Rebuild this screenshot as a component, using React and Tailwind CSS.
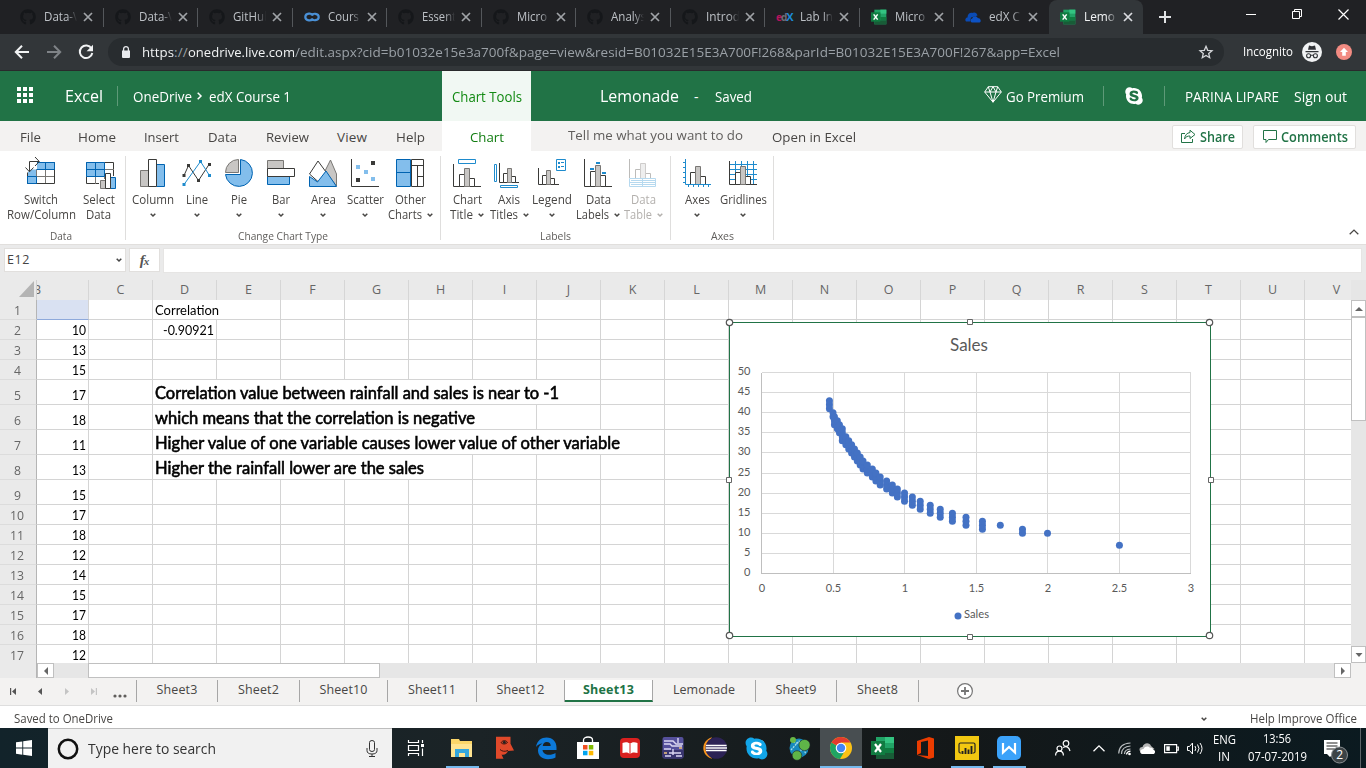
import React, { useLayoutEffect, useRef } from 'react';
import { FaGithub, FaSkype } from 'react-icons/fa';

// Text run fitted to exactly `w` pixels: condensed when too wide, tracked out when too narrow.
function Fit({ w, className = '', children }) {
  const ref = useRef(null);
  useLayoutEffect(() => {
    const el = ref.current;
    el.style.letterSpacing = '0px';
    el.style.transform = 'none';
    const natural = el.getBoundingClientRect().width;
    if (natural > w) {
      el.style.transformOrigin = '0 50%';
      el.style.transform = `scaleX(${w / natural})`;
    } else {
      el.style.letterSpacing = `${(w - natural) / el.textContent.length}px`;
    }
  }, [w, children]);
  return (
    <span className={`block shrink-0 whitespace-nowrap ${className}`} style={{ width: w }}>
      <span ref={ref} className="inline-block">{children}</span>
    </span>
  );
}

const Svg = ({ w = 24, h = 24, box, className = '', children }) => (
  <svg width={w} height={h} viewBox={box || `0 0 ${w} ${h}`} className={`block shrink-0 overflow-visible ${className}`} fill="none">
    {children}
  </svg>
);

const Chevron = ({ className = '' }) => (
  <Svg w={6} h={4} className={className}>
    <path d="M0.7 0.7 3 3 5.3 0.7" stroke="currentColor" strokeWidth="1.5" />
  </Svg>
);

/* ---------- Browser ---------- */

const ExcelLogo = ({ size = 16 }) => (
  <Svg w={size} h={size} box="0 0 24 24">
    <path d="M5 1h18v22H5z" fill="#21a366" />
    <path d="M14 1h9v6h-9z" fill="#33c481" />
    <path d="M5 7h9v6H5z" fill="#107c41" />
    <path d="M14 12h9v5h-9z" fill="#107c41" />
    <path d="M5 17h18v6H5z" fill="#185c37" />
    <path d="M0 5h14v14H0z" fill="#107c41" />
    <path d="m4 8 6 8M10 8l-6 8" stroke="#fff" strokeWidth="2.2" />
  </Svg>
);

const Coursera = () => (
  <Svg w={16} h={16}>
    <path d="M9.300 9.700C8 12 1.300 12.300 1.300 8S8 3.800 9.300 6.500M7.200 9.500C8.500 12 14.700 12 14.700 8S8.500 4 7.200 6.500" stroke="#4a90d6" strokeWidth="2.200" />
  </Svg>
);

const EdX = () => (
  <div className="flex w-4 items-center font-['Open_Sans',sans-serif] text-[10px] font-bold leading-4 tracking-[-1px]">
    <span className="text-[#b5145b]">e</span>
    <span className="text-[#6e6e75]">d</span>
    <span className="text-[11px] text-[#1b8ad6]">X</span>
  </div>
);

const Drive = () => (
  <Svg w={16} h={16}>
    <path d="M1 12.500c-1.500-2 0-4 1.500-4C2.500 5 5 3 8 4c1.500-1 4 0 4.500 2.500L6 8.500 5 12.500z" fill="#0a4bb5" />
    <path d="M7 13.500c-2-.5-2-3.500.2-4C8 6.800 11.500 6.500 12.700 9c3 0 4 3.500 2 4.500z" fill="#0d52c4" />
  </Svg>
);

const git = <FaGithub size={16} color="#15171a" />;
const TABS = [
  [git, 'Data-V', 36],
  [git, 'Data-V', 36],
  [git, 'GitHub', 38],
  [<Coursera />, 'Cours', 31],
  [git, 'Essent', 34],
  [git, 'Micro', 30],
  [git, 'Analys', 35],
  [git, 'Introd', 34],
  [<EdX />, 'Lab In', 33],
  [<ExcelLogo />, 'Micro', 30],
  [<Drive />, 'edX C', 31],
  [<ExcelLogo />, 'Lemo', 31],
];

function BrowserTab({ icon, label, w, active, divider }) {
  return (
    <div className={`relative flex h-[34px] w-[94.5px] shrink-0 items-center pl-[11px] ${active ? 'rounded-t-lg bg-[#323639]' : ''}`}>
      {icon}
      <div className="ml-2 w-[33px] overflow-hidden [mask-image:linear-gradient(to_right,black_70%,transparent)]">
        <Fit w={w} className={`text-[12px] leading-4 ${active ? 'text-[#f1f3f4]' : 'text-[#bdc1c6]'}`}>{label}</Fit>
      </div>
      <Svg w={8} h={8} className="ml-[7px]">
        <path d="m0 0 8 8M8 0 0 8" stroke={active ? '#dadce0' : '#a0a3a7'} strokeWidth="1.700" />
      </Svg>
      {divider && <div className="absolute right-0 top-[8px] h-[19px] w-px bg-[#54575b]" />}
    </div>
  );
}

function Browser() {
  return (
    <div className="bg-[#202124] font-['Open_Sans',sans-serif]">
      <div className="flex h-[34px] items-center pl-[9px]">
        {TABS.map(([icon, label, w], i) => (
          <BrowserTab key={i} icon={icon} label={label} w={w} active={i === 11} divider={i < 10} />
        ))}
        <Svg w={12} h={12} className="ml-[16px]">
          <path d="M6 0v12M0 6h12" stroke="#e0e2e4" strokeWidth="2" />
        </Svg>
        <div className="mb-[6px] ml-[75px] flex items-center">
          <Svg w={10} h={10}><path d="M0 5.500h10" stroke="#fff" /></Svg>
          <Svg w={10} h={10} className="ml-9">
            <path d="M.5 2.500h7v7h-7zM2.500 2V.5h7v7H8" stroke="#fff" />
          </Svg>
          <Svg w={11} h={11} className="ml-9"><path d="m.5.5 10 10m0-10-10 10" stroke="#fff" strokeWidth="1.200" /></Svg>
        </div>
      </div>
      <div className="flex h-[36px] items-center bg-[#323639] pl-[14px]">
        <Svg w={16} h={14}>
          <path d="M15 7H2M8 .8 1.800 7 8 13.200" stroke="#f1f3f4" strokeWidth="2" />
        </Svg>
        <Svg w={16} h={14} className="ml-4">
          <path d="M1 7h13M8 .8 14.200 7 8 13.200" stroke="#7f8387" strokeWidth="2" />
        </Svg>
        <Svg w={16} h={16} className="ml-4">
          <path d="M13.500 4.500A6.300 6.300 0 1 0 14.300 9" stroke="#f1f3f4" strokeWidth="2" />
          <path d="M15 .8v6.400H8.600z" fill="#f1f3f4" />
        </Svg>
        <div className="ml-[14px] flex h-[28px] w-[1116px] items-center rounded-full bg-[#282c2f] pl-[14px]">
          <Svg w={8} h={12}>
            <path d="M0 4.500h8V11a1 1 0 0 1-1 1H1a1 1 0 0 1-1-1z" fill="#e8eaed" />
            <path d="M1.600 5V3a2.400 2.400 0 0 1 4.800 0v2" stroke="#e8eaed" strokeWidth="1.300" />
          </Svg>
          <div className="ml-[12px] flex text-[13.5px] leading-5 text-[#9aa0a6]">
            <Fit w={32} className="text-[#f1f3f4]">https</Fit>
            <Fit w={14}>://</Fit>
            <Fit w={107} className="text-[#f1f3f4]">onedrive.live.com</Fit>
            <Fit w={765}>/edit.aspx?cid=b01032e15e3a700f&amp;page=view&amp;resid=B01032E15E3A700F!268&amp;parId=B01032E15E3A700F!267&amp;app=Excel</Fit>
          </div>
          <Svg w={14} h={14} className="ml-[139px]">
            <path d="m7 1.300 1.700 4 4.300.4-3.300 2.800 1 4.200L7 10.500l-3.700 2.200 1-4.200L1 5.700l4.300-.4z" stroke="#d5d7da" strokeWidth="1.300" />
          </Svg>
        </div>
        <Fit w={50} className="ml-[19px] text-[12px] leading-4 text-white">Incognito</Fit>
        <Svg w={20} h={20} className="ml-[9px]">
          <circle cx="10" cy="10" r="10" fill="#f1f3f4" />
          <path d="M3.500 9h13v1.200h-13zM6 7.800l1-4.300 3 .7 3-.7 1 4.300z" fill="#303337" />
          <circle cx="6.600" cy="13.800" r="2" stroke="#303337" strokeWidth="1.100" />
          <circle cx="13.400" cy="13.800" r="2" stroke="#303337" strokeWidth="1.100" />
          <path d="M8.600 13.500q1.400-.8 2.800 0" stroke="#303337" />
        </Svg>
        <Svg w={16} h={16} className="ml-[14px]">
          <circle cx="8" cy="8" r="8" fill="#f28b82" />
          <path d="m8 3.800 4 4.200H9.800v3.800H6.200V8H4z" fill="#fff" />
        </Svg>
      </div>
      <div className="h-px bg-[#292a2c]" />
    </div>
  );
}

/* ---------- Excel header ---------- */

function ExcelHeader() {
  return (
    <div className="flex h-[50px] items-center bg-[#217346] text-[14px] leading-5 text-white">
      <div className="mb-[2px] ml-[17px] grid grid-cols-3 gap-[2px]">
        {Array.from({ length: 9 }, (_, i) => <div key={i} className="size-[4px] bg-white" />)}
      </div>
      <Fit w={38} className="ml-[32px] text-[17px]">Excel</Fit>
      <div className="ml-[14px] h-[20px] w-px bg-[#5e9a78]" />
      <Fit w={59} className="ml-[15px] mt-px">OneDrive</Fit>
      <Svg w={5} h={8} className="ml-[5px]"><path d="m.7.700 3.300 3.300-3.300 3.300" stroke="#fff" strokeWidth="1.500" /></Svg>
      <Fit w={82} className="ml-[7px] mt-px">edX Course 1</Fit>
      <div className="ml-[151px] flex h-[50px] w-[89px] items-center justify-center bg-[#f1f8f3] text-[#138a13]">
        <Fit w={70} className="mt-[2px]">Chart Tools</Fit>
      </div>
      <Fit w={79} className="ml-[69px] text-[17px]">Lemonade</Fit>
      <Fit w={6} className="ml-[15px] mt-px">-</Fit>
      <Fit w={37} className="ml-[15px] mt-px">Saved</Fit>
      <Svg w={18} h={17} className="-mt-[3px] ml-[232px]">
        <path d="M4.300.7h9.400L17.300 6 9 16.200.7 6zM.7 6h16.600M4.300.7 6 6l3 10.200M13.700.7 12 6 9 16.200M9 .7 6 6m3-5.300L12 6" stroke="#fff" strokeWidth="1" />
      </Svg>
      <Fit w={78} className="ml-[4px] mt-px">Go Premium</Fit>
      <div className="ml-[19px] h-[20px] w-px bg-[#5e9a78]" />
      <FaSkype size={20} className="ml-[20px] shrink-0" />
      <div className="ml-[20px] h-[20px] w-px bg-[#5e9a78]" />
      <Fit w={94} className="ml-[20px] mt-px">PARINA LIPARE</Fit>
      <Fit w={53} className="ml-[15px] mt-px">Sign out</Fit>
    </div>
  );
}

const MenuItem = ({ box, w, children }) => (
  <div className={`flex shrink-0 justify-center ${box}`}><Fit w={w}>{children}</Fit></div>
);

function MenuBar() {
  return (
    <div className="flex h-[30px] items-center bg-[#f3f2f1] pt-px text-[13.5px] leading-5 text-[#484644]">
      <MenuItem box="w-[61px]" w={21}>File</MenuItem>
      <MenuItem box="w-[72px]" w={38}>Home</MenuItem>
      <MenuItem box="w-[57px]" w={35}>Insert</MenuItem>
      <MenuItem box="w-[64px]" w={29}>Data</MenuItem>
      <MenuItem box="w-[66px]" w={43}>Review</MenuItem>
      <MenuItem box="w-[64px]" w={30}>View</MenuItem>
      <MenuItem box="w-[53px]" w={29}>Help</MenuItem>
      <div className="-mt-px ml-[5px] flex h-[30px] w-[89px] items-center justify-center bg-white pt-[2px] text-[#107c10]">
        <Fit w={34}>Chart</Fit>
      </div>
      <Fit w={175} className="-mt-[3px] ml-[37px] text-[#605e5c]">Tell me what you want to do</Fit>
      <Fit w={84} className="ml-[29px]">Open in Excel</Fit>
      <div className="ml-[316px] flex h-[24px] w-[71px] items-center rounded-[2px] border border-[#e1dfdd] bg-white pl-[8px] text-[#217346]">
        <Svg w={15} h={15}>
          <path d="M4 4.500H.5v9h11V10" stroke="#217346" />
          <path d="M9 1.200 14 5.500 9 9.500V7c-2.500 0-4 .5-5.500 3C4 6 6 3.800 9 3.600z" stroke="#217346" strokeLinejoin="round" />
        </Svg>
        <Fit w={35} className="ml-[4px] font-semibold">Share</Fit>
      </div>
      <div className="ml-[10px] flex h-[24px] w-[103px] items-center rounded-[2px] border border-[#e1dfdd] bg-white pl-[9px] text-[#217346]">
        <Svg w={14} h={13}>
          <path d="M.5.500h13v9H5.500l-2.500 3v-3H.5z" stroke="#217346" />
        </Svg>
        <Fit w={67} className="ml-[4px] font-semibold">Comments</Fit>
      </div>
    </div>
  );
}

/* ---------- Ribbon ---------- */

const K = '#3a3a38';
const G = '#c8c6c4';
const GD = '#797774';
const B = '#83beec';
const BD = '#0063b1';
const L = '#1e8bcd';

const I = {
  switch: (
    <>
      <path d="M27.500 162.500h27v21h-27z" fill="#fff" />
      <path d="M37 162.500h17.500v7H37zM27.500 176.500h9v7h-9zM27.500 169.500h9v7h-9z" fill={B} />
      <path d="M36.500 176.500h18M45.500 169.500v14M36.500 183.500v-14" stroke={GD} />
      <path d="M27.500 170v13.500h27v-21H37" stroke={K} />
      <path d="M36.500 169.500h18m-9-7v7m-18 7h9v7M37 162.500h17.500v7M27.500 176v7.500h9" stroke={BD} />
      <path d="M24 157h13l-2 8-9 9z" fill="#fff" />
      <path d="M29.500 171.500v-10h9.500M25.500 167.500l4 4.300 4-4.300M35 157l4.300 4.500L35 166" stroke={K} />
    </>
  ),
  select: (
    <>
      <path d="M85.500 162.500h27v21h-27z" fill="#fff" stroke={K} />
      <path d="M85.500 162.500h18v14h-18z" fill={B} />
      <path d="M103.500 162v21M85 176.500h27M103 169.500h10M94.500 176v8" stroke={GD} />
      <path d="M85.500 162.500h18v14h-18zM94.500 162v14M85 169.500h18" stroke={BD} />
      <path d="M98 179h6v-7h6v4h6v14H98z" fill="#fff" />
      <path d="M99.500 180.500h5v8h-5z" fill={G} stroke={GD} />
      <path d="M109.500 177.500h5v11h-5z" fill={B} stroke={BD} />
      <path d="M104.500 173.500h5v15h-5z" fill="#fff" stroke={K} />
    </>
  ),
  column: (
    <>
      <path d="M140.500 170.500h8v16h-8z" fill={G} stroke={GD} />
      <path d="M156.500 164.500h8v22h-8z" fill={B} stroke={BD} />
      <path d="M148.500 159.500h8v27h-8z" fill="#fff" stroke={K} />
    </>
  ),
  line: (
    <>
      <path d="m184 175.500 4.500-10 10 15 10.500-16" stroke={K} />
      <path d="m184 184.500 16.500-23 9 14" stroke={L} />
      <path d="M182.500 174h3v3h-3zM187 164h3v3h-3zM197 179h3v3h-3zM208 163h3v3h-3z" fill={K} />
      <path d="M182.500 183h3v3h-3zM199 160h3v3h-3zM208 174h3v3h-3z" fill={L} />
    </>
  ),
  pie: (
    <>
      <path d="M240.500 159.500a13.500 13.500 0 1 1-15 15h15z" fill={B} stroke={BD} />
      <path d="M225.500 172.500a13 13 0 0 1 13-13v13z" fill={G} stroke={GD} />
    </>
  ),
  bar: (
    <>
      <path d="M267.500 160.500h16v8h-16z" fill={G} stroke={GD} />
      <path d="M267.500 176.500h22v8h-22z" fill={B} stroke={BD} />
      <path d="M267.500 168.500h27v8h-27z" fill="#fff" stroke={K} />
    </>
  ),
  area: (
    <>
      <path d="m325 171 5.500-11 6 14v12z" fill={G} stroke={GD} />
      <path d="m309.500 174 8.500-13 8 11-7.500 10z" fill="#fff" stroke={K} />
      <path d="M309.500 186.500v-10l8 5.500 8.500-11 10.500 15.500z" fill={B} stroke={BD} />
    </>
  ),
  scatter: (
    <>
      <path d="M351.500 159v27.500H379" stroke={K} />
      <path d="M371 161h4v4h-4zM356 178h4v4h-4z" fill={K} />
      <path d="M356 165h4v4h-4zM364 170h4v4h-4zM371 177h4v4h-4z" fill={B} />
    </>
  ),
  other: (
    <>
      <path d="M411.500 159.500h12v27h-12zM411 165.500h13M417.500 165v21M417 176.500h7" fill="#fff" stroke={K} />
      <path d="M396.500 159.500h14v27h-14zM396.500 172.500h14" fill={B} stroke={BD} />
    </>
  ),
  title: (
    <>
      <path d="M458.500 159.500h17v4h-17z" stroke={L} />
      <path d="M453.500 164v22.500H481" stroke={K} />
      <path d="M459.500 174.500h5v12h-5zM469.500 178.500h5v8h-5z" fill="#fff" stroke={K} />
      <path d="M464.500 168.500h5v18h-5z" fill={G} stroke={GD} />
    </>
  ),
  titles: (
    <>
      <path d="M494.500 164.500h2v17h-2zM500.500 185.500h17v2h-17z" stroke={L} />
      <path d="M499.500 163v19.500H519" stroke={K} />
      <path d="M503.500 173.500h4v9h-4zM511.500 176.500h4v6h-4z" fill="#fff" stroke={K} />
      <path d="M507.500 168.500h4v14h-4z" fill={G} stroke={GD} />
    </>
  ),
  legend: (
    <>
      <path d="M556.500 159.500h9v11h-9z" stroke={L} />
      <path d="M558 162h2v2h-2zm3 0h3v1h-3zM558 166h2v2h-2zm3 0h3v1h-3z" fill={L} />
      <path d="M538.500 168v16.500H559" stroke={K} />
      <path d="M542.500 175.500h4v9h-4zM550.500 178.500h4v6h-4z" fill="#fff" stroke={K} />
      <path d="M546.500 170.500h4v14h-4z" fill={G} stroke={GD} />
    </>
  ),
  labels: (
    <>
      <path d="M584.500 159v27.500H612" stroke={K} />
      <path d="M590.500 171.500h5v15h-5zM600.500 175.500h5v11h-5z" fill="#fff" stroke={K} />
      <path d="M595.500 165.500h5v21h-5z" fill={G} stroke={GD} />
      <path d="M590 168h4v2h-4zM596 162h4v2h-4zM602 172h4v2h-4z" fill={L} />
    </>
  ),
  table: (
    <>
      <path d="M629.500 159v19" stroke="#bcbbb9" />
      <path d="M635.500 169.500h5v9h-5zM645.500 173.500h5v5h-5z" fill="#fff" stroke="#bcbbb9" />
      <path d="M640.500 163.500h5v15h-5z" fill="#eee" stroke="#cecccb" />
      <path d="M629.500 178.500h26v8h-26zM629 182.500h27M642.500 178v8M631 180.500h24M631 184.500h24" fill="#fff" stroke="#b6d9ef" />
    </>
  ),
  axes: (
    <>
      <path d="M690.500 172.500h5v12h-5zM700.500 176.500h5v8h-5z" fill="#fff" stroke={K} />
      <path d="M695.500 166.500h5v18h-5z" fill={G} stroke={GD} />
      <path d="M685.500 159v25.500H711M683 162.500h2m-2 5h2m-2 5h2m-2 5h2m-2 5h2M688.500 185v2m5-2v2m5-2v2m5-2v2m5-2v2" stroke={L} />
    </>
  ),
  grid: (
    <>
      <path d="M735.500 161v23m6-23v23m6-23v23m6-23v23M730 164.500h27m-27 5h27m-27 5h27m-27 5h27" stroke={L} />
      <path d="M729.500 161v23.500H757" stroke={K} />
      <path d="M735.500 172.500h5v12h-5zM745.500 176.500h5v8h-5z" fill="#fff" stroke={K} />
      <path d="M740.500 166.500h5v18h-5z" fill={G} stroke={GD} />
    </>
  ),
};

const GROUPS = [
  { label: 'Data', lw: 22, width: 'w-[126px] pl-[3px]', items: [
    ['w-[76px]', 41, 'switch', ['Switch', 34], ['Row/Column', 69]],
    ['w-[39px]', 98, 'select', ['Select', 32], ['Data', 25]],
  ] },
  { label: 'Change Chart Type', lw: 90, width: 'w-[315px] pl-[5px]', items: [
    ['w-[44px]', 153, 'column', ['Column', 42]],
    ['w-[44px]', 197, 'line', ['Line', 22]],
    ['w-[40px]', 239, 'pie', ['Pie', 16]],
    ['w-[44px]', 281, 'bar', ['Bar', 18]],
    ['w-[40px]', 323, 'area', ['Area', 25]],
    ['w-[44px]', 365, 'scatter', ['Scatter', 37]],
    ['w-[46px]', 410, 'other', ['Other', 31], ['Charts', 34], true],
  ] },
  { label: 'Labels', lw: 31, width: 'w-[230px] pl-[6px]', items: [
    ['w-[40px]', 467, 'title', ['Chart', 29], ['Title', 23], true],
    ['w-[44px]', 509, 'titles', ['Axis', 22], ['Titles', 28], true],
    ['w-[42px]', 552, 'legend', ['Legend', 40]],
    ['w-[50px]', 598, 'labels', ['Data', 25], ['Labels', 33], true],
    ['w-[40px]', 643, 'table', ['Data', 25], ['Table', 28], true, true],
  ] },
  { label: 'Axes', lw: 23, width: 'w-[103px] pl-[6px]', items: [
    ['w-[40px]', 697, 'axes', ['Axes', 25]],
    ['w-[52px]', 743, 'grid', ['Gridlines', 47]],
  ] },
];

function RibbonButton({ item }) {
  const [box, cx, icon, l1, l2, arrow, disabled] = item;
  return (
    <div className={`flex shrink-0 flex-col items-center ${box} ${disabled ? 'text-[#b3b0ad]' : 'text-[#484644]'}`}>
      <Svg w={32} h={35} box={`${cx - 16} 155 32 35`}>{I[icon]}</Svg>
      <Fit w={l1[1]} className="mt-[2px]">{l1[0]}</Fit>
      <div className="flex h-[15px] items-center justify-center">
        {l2 && <Fit w={l2[1]}>{l2[0]}</Fit>}
        {(arrow || !l2) && <Chevron className={l2 ? 'ml-[5px]' : 'mt-px'} />}
      </div>
    </div>
  );
}

function Ribbon() {
  return (
    <div className="flex h-[94px] border-b border-[#e1dfdd] bg-white text-[12px] leading-[15px]">
      {GROUPS.map((g) => (
        <div key={g.label} className={`relative flex shrink-0 flex-col pt-[4px] ${g.width}`}>
          <div className="flex h-[70px]">
            {g.items.map((it) => <RibbonButton key={it[2]} item={it} />)}
          </div>
          <div className="flex justify-center pr-[7px] pt-[3px] text-[11px] text-[#605e5c]"><Fit w={g.lw}>{g.label}</Fit></div>
          <div className="absolute right-0 top-[5px] h-[84px] w-px bg-[#dfdedd]" />
        </div>
      ))}
      <div className="flex flex-1 items-end justify-end pb-[9px] pr-[7px]">
        <Svg w={10} h={6}><path d="m.7 5.300 4.300-4.200 4.300 4.200" stroke="#484644" strokeWidth="1.300" /></Svg>
      </div>
    </div>
  );
}

function FormulaBar() {
  return (
    <div className="flex h-[35px] items-start bg-[#eaeaea] pl-[4px] pt-[3px]">
      <div className="flex h-[24px] w-[122px] items-center justify-between border border-[#e1dfdd] bg-white pl-[2px] pr-[3px] text-[12.5px] text-[#444]">
        <Fit w={23} className="mt-px">E12</Fit>
        <Chevron />
      </div>
      <div className="ml-[3px] flex h-[24px] w-[31px] items-center justify-center border border-[#e1dfdd] bg-white pb-px font-['Liberation_Serif',serif] text-[15px] font-bold italic leading-5 text-[#555]">
        f<span className="-ml-px mt-[3px] text-[11px]">x</span>
      </div>
      <div className="ml-[3px] h-[25px] w-[1199px] border border-[#e6e5e4] bg-white" />
    </div>
  );
}

/* ---------- Grid ---------- */

const COLS = 'CDEFGHIJKLMNOPQRSTUV'.split('');
const B_VALUES = ['', 10, 13, 15, 17, 18, 11, 13, 15, 17, 18, 12, 14, 15, 17, 18, 12];
// row -> [text, width, number of columns covered starting at D]
const NOTES = {
  1: ['Correlation', 64, 2],
  5: ['Correlation value between rainfall and sales is near to -1', 404, 7],
  6: ['which means that the correlation is negative', 320, 6],
  7: ['Higher value of one variable causes lower value of other variable', 465, 8],
  8: ['Higher the rainfall lower are the sales', 269, 5],
};

function Row({ n }) {
  const tall = n >= 5 && n <= 9;
  const note = NOTES[n];
  return (
    <div className={`flex shrink-0 ${tall ? 'h-[25px]' : 'h-[20px]'}`}>
      <div className="flex w-[37px] shrink-0 items-end justify-center border-b border-r border-b-[#dcdcdc] border-r-[#b5b5b5] bg-[#eaeaea] pr-[2px] text-[12.5px] leading-[17px] text-[#666]">
        <Fit w={n > 9 ? 14 : 7}>{String(n)}</Fit>
      </div>
      <div className={`flex w-[52px] shrink-0 items-end justify-end border-b border-r pr-[2px] ${n === 1 ? 'border-b-[#8ea9db] border-r-[#d4d4d4] bg-[#d9e1f2]' : 'border-[#d4d4d4]'}`}>
        {n > 1 && <Fit w={14} className="font-['Lato',sans-serif] text-[13.5px] leading-[17px] text-black">{String(B_VALUES[n - 1])}</Fit>}
      </div>
      {COLS.map((c, i) => {
        const spill = note && i >= 1 && i < note[2];
        return (
          <div key={c} className={`relative flex w-[64px] shrink-0 items-end border-b ${spill ? 'border-b-[#d4d4d4]' : 'border-r border-[#d4d4d4]'}`}>
            {c === 'D' && note && (
              <Fit w={note[1]} className={`relative z-10 ml-[2px] font-['Lato',sans-serif] text-black ${n === 1 ? 'text-[13.5px] leading-[17px]' : 'text-[17px] leading-[23px] [-webkit-text-stroke:0.6px_black]'}`}>{note[0]}</Fit>
            )}
            {c === 'D' && n === 2 && <Fit w={51} className="ml-[10px] font-['Lato',sans-serif] text-[13.5px] leading-[17px] text-black">-0.90921</Fit>}
          </div>
        );
      })}
    </div>
  );
}

const POINTS = [
  [0.475, 41, 43], [0.5, 39, 40], [0.51, 37, 39], [0.53, 36, 38], [0.545, 35, 37], [0.565, 33, 36],
  [0.59, 32, 34], [0.61, 31, 33], [0.63, 30, 32], [0.65, 29, 31], [0.67, 28, 30], [0.69, 27, 29], [0.71, 26, 28],
  [0.74, 25, 27], [0.775, 24, 26], [0.8, 23, 25], [0.83, 22, 24], [0.875, 21, 23], [0.915, 20, 22], [0.95, 19, 21],
  [1, 18, 20], [1.055, 17, 19], [1.11, 16, 18], [1.18, 15, 17], [1.25, 14, 16], [1.335, 13, 15], [1.43, 12, 14],
  [1.545, 11, 13], [1.67, 12, 12], [1.825, 10, 11], [2, 10, 10], [2.503, 7, 7],
];
const px = (v) => 32.5 + v * 143;
const py = (v) => 251.5 - v * 4.02;

function SalesChart() {
  const dots = POINTS.flatMap(([x, lo, hi]) => Array.from({ length: (hi - lo) * 2 + 1 }, (_, i) => [x, lo + i / 2]));
  const ys = [0, 5, 10, 15, 20, 25, 30, 35, 40, 45, 50];
  const xs = [0, 0.5, 1, 1.5, 2, 2.5, 3];
  return (
    <div className="absolute left-[729px] top-[42px] z-20">
      <Svg w={482} h={315}>
        <rect x="0.500" y="0.500" width="481" height="314" fill="#fff" stroke="#217346" />
        <g stroke="#d9d9d9" shapeRendering="crispEdges">
          {ys.map((v) => <path key={v} d={`M32.500 ${py(v)}H461.500`} />)}
          {xs.map((v) => <path key={v} d={`M${px(v)} 50.500V251.500`} />)}
          <path d="M32.500 50.500v201h429" stroke="#bfbfbf" />
        </g>
        {dots.map(([x, y], i) => (
          <circle key={i} cx={px(x)} cy={py(y)} r={y % 1 ? 3 : 3.5} fill="#4472c4" />
        ))}
        <g className="font-['Lato',sans-serif] text-[11px]" fill="#595959">
          {ys.map((v) => <text key={v} x="21.500" y={py(v) + 2.5} textAnchor="end">{v}</text>)}
          {xs.map((v) => <text key={v} x={px(v) + 0.5} y="270" textAnchor="middle">{v}</text>)}
          <text x="240" y="29" textAnchor="middle" textLength="38" lengthAdjust="spacingAndGlyphs" className="text-[18px]">Sales</text>
          <text x="235" y="296" textLength="25" lengthAdjust="spacingAndGlyphs" className="text-[12px]">Sales</text>
        </g>
        <circle cx="229" cy="294" r="3.500" fill="#4472c4" />
        <g fill="#fff" stroke="#555">
          {[[0.5, 0.5], [480.5, 0.5], [0.5, 313.5], [480.5, 313.5]].map(([x, y]) => <circle key={`${x}-${y}`} cx={x} cy={y} r="3.200" strokeWidth="1.200" />)}
          {[[241, 0], [241, 315], [0, 158], [482, 158]].map(([x, y]) => <path key={`${x}-${y}`} d={`M${x - 2.5} ${y - 2.5}h5v5h-5z`} stroke="#666" />)}
        </g>
      </Svg>
    </div>
  );
}

const ScrollButton = ({ box, d }) => (
  <div className={`flex shrink-0 items-center justify-center border border-[#c0c0c0] bg-white ${box}`}>
    <Svg w={8} h={8}><path d={d} fill="#666" /></Svg>
  </div>
);

function Sheet() {
  return (
    <div className="relative flex h-[398px] flex-col bg-white">
      <div className="flex h-[383px]">
        <div className="flex h-[383px] w-[1351px] flex-col overflow-hidden">
          <div className="flex h-[20px] shrink-0 bg-[#eaeaea] text-[12.5px] leading-5 text-[#666]">
            <div className="flex w-[37px] shrink-0 items-start justify-end border-r border-[#d0d0d0] pr-[2px] pt-px">
              <Svg w={15} h={16}><path d="M15 0v16H0z" fill="#b4b4b4" /></Svg>
            </div>
            <div className="w-[52px] shrink-0 overflow-hidden border-r border-[#d6d6d6]"><div className="-ml-[4px]">B</div></div>
            {COLS.map((c) => <div key={c} className="w-[64px] shrink-0 border-r border-[#d6d6d6] text-center">{c}</div>)}
          </div>
          {B_VALUES.map((_, i) => <Row key={i} n={i + 1} />)}
        </div>
        <div className="flex w-[15px] flex-col bg-[#e6e6e6] pt-[20px]">
          <ScrollButton box="h-[17px] w-[15px]" d="M0 6h8L4 2z" />
          <div className="h-[104px] border border-[#c0c0c0] bg-white" />
          <div className="flex-1" />
          <ScrollButton box="h-[17px] w-[15px]" d="M0.500 2h7L4 6z" />
        </div>
      </div>
      <div className="flex h-[15px] bg-[#e6e6e6]">
        <div className="w-[37px] shrink-0 border-r border-[#b5b5b5] bg-[#eaeaea]" />
        <ScrollButton box="h-[15px] w-[17px]" d="M6 0v8L2 4z" />
        <div className="ml-[34px] w-[292px] border border-[#c0c0c0] bg-white" />
        <div className="flex-1" />
        <ScrollButton box="h-[15px] w-[17px]" d="M2 0v8l4-4z" />
        <div className="w-[15px] bg-[#f3f2f1]" />
      </div>
      <SalesChart />
    </div>
  );
}

const SHEETS = [
  ['Sheet3', 'w-[81px]', 41], ['Sheet2', 'w-[82px]', 41], ['Sheet10', 'w-[88px]', 48], ['Sheet11', 'w-[89px]', 48],
  ['Sheet12', 'w-[88px]', 48], ['Sheet13', 'w-[88px]', 51], ['Lemonade', 'w-[103px]', 62], ['Sheet9', 'w-[81px]', 41], ['Sheet8', 'w-[82px]', 41],
];

function SheetTabs() {
  return (
    <div className="flex h-[28px] items-start border-b border-[#dedede] bg-[#f3f2f1] text-[12.5px] leading-[20px] text-[#484644]">
      <div className="mt-[2px] flex h-[22px] w-[137px] shrink-0 items-center border-r border-[#a6a6a6] pl-[10px]">
        <Svg w={6} h={7}><path d="M0 0h1.200v7H0z M6 0v7L2 3.500z" fill="#555" /></Svg>
        <Svg w={4} h={7} className="ml-[22px]"><path d="M4 0v7L0 3.500z" fill="#555" /></Svg>
        <Svg w={4} h={7} className="ml-[23px]"><path d="M0 0v7l4-3.500z" fill="#c4c4c4" /></Svg>
        <Svg w={6} h={7} className="ml-[22px]"><path d="M6 0H4.800v7H6zM0 0v7l4-3.500z" fill="#c4c4c4" /></Svg>
        <Svg w={14} h={4} className="ml-[16px] mt-[10px]"><circle cx="2" cy="2" r="1.600" fill="#605e5c" /><circle cx="7" cy="2" r="1.600" fill="#605e5c" /><circle cx="12" cy="2" r="1.600" fill="#605e5c" /></Svg>
      </div>
      {SHEETS.map(([name, box, w]) => (
        <div key={name} className={`mt-[2px] flex h-[22px] shrink-0 justify-center border-r border-[#a6a6a6] ${box} ${name === 'Sheet13' ? 'border-b-2 border-b-[#217346] bg-white font-bold text-[#217346]' : ''}`}>
          <Fit w={w}>{name}</Fit>
        </div>
      ))}
      <Svg w={16} h={16} className="ml-[38px] mt-[5px]">
        <circle cx="8" cy="8" r="7.400" stroke="#767676" strokeWidth="1.200" fill="#fff" />
        <path d="M8 4v8M4 8h8" stroke="#767676" strokeWidth="1.800" />
      </Svg>
    </div>
  );
}

/* ---------- Windows taskbar ---------- */

const SkypeApp = () => (
  <div className="relative flex size-[24px] items-center justify-center">
    <div className="absolute left-[5px] top-[4px] h-[16px] w-[14px] rounded bg-white" />
    <FaSkype size={25} color="#12a5e8" className="relative shrink-0" />
  </div>
);

const APPS = [
  ['explorer', <Svg><path d="M1 3h8l1 2h12v16H1z" fill="#fbd669" /><path d="M1 8h21v13H1z" fill="#ffe491" /><path d="M5 13h14v8h-4v-4H9v4H5z" fill="#35a7dd" /></Svg>, true],
  ['face', <Svg><path d="M4 .7h14.500v7L22 14.500l-6 .5c-1 3-4 4.300-6.500 3.500l2 4.200H4z" fill="#e0492a" /><path d="M8 13.500c2 2 5 2.300 8 1M9 6.500c2-2.500 5-2.500 6.500 0-2 2-5 2-6.500 0z" stroke="#3a1510" /><circle cx="12.300" cy="6.300" r="1.400" fill="#222" /></Svg>],
  ['edge', <Svg><path d="M2 11C3 4.500 7.500 1.500 12.500 1.500c6.500 0 10 4.500 10 10V14H8.500c.3 3 3 4.800 6.500 4.800 2.500 0 4.700-.7 6.500-1.800v4.500c-2 1.200-4.500 1.700-7.500 1.700C8 23.200 4 19.500 4 14.500c0-3 1.500-5.500 4.500-7C6 7.600 3.500 9 2 11zm6.700-1h8c0-2.500-1.400-4-4-4-2.200 0-3.600 1.600-4 4z" fill="#0c79d9" /></Svg>],
  ['store', <Svg><path d="M1 6h22v17H1z" fill="#fff" /><path d="M7.500 6V4c0-4 9-4 9 0v2" stroke="#fff" strokeWidth="1.300" /><path d="M7 9h4.500v4.500H7z" fill="#f25022" /><path d="M12.800 9h4.500v4.500h-4.500z" fill="#7fba00" /><path d="M7 14.800h4.500v4.500H7z" fill="#00a4ef" /><path d="M12.800 14.800h4.500v4.500h-4.500z" fill="#ffb900" /></Svg>],
  ['book', <Svg><rect x="2" y="2" width="20" height="20" rx="4" fill="#d9201f" /><path d="M4.500 7c3-1.500 6-1 7.500 1 1.500-2 4.500-2.500 7.500-1v10c-3-1-6-.8-7.500 1-1.500-1.800-4.500-2-7.500-1z" fill="#fff" /><path d="M12 8v10" stroke="#d9201f" /></Svg>],
  ['circuit', <Svg><rect x="1.500" y="1" width="21" height="21.500" rx="2" fill="#55509b" /><path d="M1.500 14h21v6.500a2 2 0 0 1-2 2h-17a2 2 0 0 1-2-2z" fill="#39356f" /><path d="M3 5h9l3 3h7M3 8h6l2 2h10M3 13h7M8 17h12M12 13v6M15 20h6M17 2v5M4 20h6" stroke="#dcd8f2" strokeWidth="1.400" /><path d="M3 17h3M18 12h3" stroke="#eec17a" strokeWidth="1.500" /></Svg>],
  ['eclipse', <Svg><path d="M9 1.500a11.500 11.500 0 0 0 0 21C4 19 4 5 9 1.500z" fill="#f7941e" /><path d="M9 1.300C-2.500 4.500-2.500 19.500 9 22.700l-2-3V4z" fill="#f7941e" /><circle cx="13.300" cy="12" r="10.800" fill="#2c2255" /><path d="M3 9.500h20.600M2.800 12h21.200M3 14.500h20.600" stroke="#fff" strokeWidth="1.500" /></Svg>],
  ['skype', <SkypeApp />],
  ['network', <Svg><circle cx="12" cy="12" r="9.500" fill="#1789bd" /><path d="m6 6 10 3-4 11M4 14l8-9 7 13" stroke="#a7dbea" strokeWidth="1.200" strokeDasharray="2 1" /><circle cx="6" cy="4" r="3" fill="#69b746" /><circle cx="17.500" cy="9" r="5.600" fill="#5fb548" stroke="#1b2326" strokeWidth=".6" /><circle cx="10" cy="19.500" r="4.800" fill="#5fb548" stroke="#1b2326" strokeWidth=".6" /></Svg>],
  ['chrome', <Svg><circle cx="12" cy="12" r="11" fill="#fbc116" /><path d="M12 12 2.500 6.500A11 11 0 0 0 11 23l5-8.500z" fill="#1fa463" /><path d="M12 12 2.500 6.500A11 11 0 0 1 21.500 6.600H12z" fill="#e33b2e" /><circle cx="12" cy="12" r="5.300" fill="#fff" /><circle cx="12" cy="12" r="4.200" fill="#4285f4" /></Svg>, true],
  ['excel', <ExcelLogo size={24} />],
  ['office', <Svg><path d="m4 5 12-4 5 1.500v19L16 23 4 19l11 1V4.500L8 6v11l-4 2z" fill="#eb3c00" /></Svg>],
  ['powerbi', <Svg><path d="M0 0h24v24H0z" fill="#f2c811" /><path d="M6 17H5.500C4.500 17 4 16.500 4 15.500V8.500C4 7.500 4.500 7 5.500 7h13c1 0 1.500.5 1.500 1.500v7c0 1-.5 1.500-1.500 1.500H18" stroke="#222" strokeWidth="1.200" /><path d="M7.500 15v3M10.500 12v6M13.500 13.500V18M16.500 10v8" stroke="#222" strokeWidth="1.900" /></Svg>, true],
  ['wps', <Svg><rect width="24" height="24" rx="5" fill="#3ba2fa" /><path d="M6 7v9.500l6-5.500 6 5.500V7" stroke="#fff" strokeWidth="2.200" /></Svg>, true],
];

function Taskbar() {
  return (
    <div className="flex h-[40px] items-center bg-[linear-gradient(to_right,#12232a,#1b2326_35%,#141819_70%,#0b1a20)] text-white">
      <div className="flex w-[48px] shrink-0 justify-center">
        <Svg w={16} h={16}><path d="M0 2.300 6.300 1.400v6.200H0zM7.200 1.300 16 0v7.600H7.200zM0 8.500h6.300v6.200L0 13.800zM7.200 8.500H16V16l-8.800-1.300z" fill="#fff" /></Svg>
      </div>
      <div className="flex h-[40px] w-[344px] shrink-0 items-center border-t border-[#bdbdbd] bg-[#f1f1f1] pl-[9px] text-[#333]">
        <Svg w={22} h={22}><circle cx="11" cy="11" r="9.200" stroke="#111" strokeWidth="2.500" /></Svg>
        <Fit w={128} className="ml-[9px] text-[15px]">Type here to search</Fit>
        <Svg w={12} h={17} className="ml-[150px]"><path d="M3.500 2.500q0-2 2.500-2t2.500 2v7q0 2-2.500 2t-2.500-2zM1 8v2.500Q1 14 6 14t5-3.500V8M6 14v2.500M3 16.500h6" stroke="#333" /></Svg>
      </div>
      <Svg w={16} h={16} className="ml-[16px]"><path d="M.5 0v2.500h10V0M.5 16v-2.500h10V16M.5 5.500h10v5H.5zM14.500 0v3M14.500 8.500V16" stroke="#fff" strokeWidth="1.200" /><path d="M13 4h3v3h-3z" fill="#fff" /></Svg>
      <div className="ml-[17px] flex">
        {APPS.map(([name, icon, open]) => (
          <div key={name} className={`relative flex h-[40px] w-[42.1px] shrink-0 items-center justify-center ${name === 'chrome' ? 'bg-[#484e51]' : ''}`}>
            {icon}
            {open && <div className={`absolute bottom-0 h-[2px] bg-[#76b9ed] ${name === 'chrome' ? 'w-[42px]' : 'w-[33px]'}`} />}
          </div>
        ))}
      </div>
      <Svg w={16} h={16} className="ml-[25px]"><circle cx="11" cy="3.500" r="2.800" stroke="#fff" strokeWidth="1.200" /><circle cx="4.500" cy="8.500" r="2.500" stroke="#fff" strokeWidth="1.200" /><path d="M.6 15.500q0-4.300 3.900-4.300t3.900 4.300M8 7.500q5.500-2.500 7 3.500" stroke="#fff" strokeWidth="1.200" /></Svg>
      <Svg w={12} h={7} className="ml-[22px]"><path d="m.5 6.300 5.500-5.500 5.500 5.500" stroke="#fff" strokeWidth="1.300" /></Svg>
      <Svg w={13} h={13} className="ml-[13px]"><path d="M.7 11.500Q1 1.500 12.500 1M3.500 12Q3.700 4.500 12.500 4M6.500 12q0-4.500 6-5" stroke="#b9bdbf" strokeWidth="1.200" /><path d="M8.500 12.500q.5-3 4-3.300" stroke="#fff" strokeWidth="1.300" /><circle cx="11.500" cy="12" r="1.300" fill="#fff" /></Svg>
      <Svg w={16} h={11} className="ml-[8px]"><path d="M2 9C-1 7 1 3.500 3.500 4 5-1 11-.5 12 3l3.500 3L9 10z" fill="#b5b5b5" /><path d="M3 11c-3-1-2-5 1.500-5C6 3 9.500 3 11 5c2-.5 3 .5 3 1.700 3 .3 2.500 4.300 0 4.300z" fill="#fff" /></Svg>
      <Svg w={15} h={9} className="ml-[9px]"><path d="M.6.600h12v8H.6zM12.600 3h1.700v3.200h-1.700" stroke="#fff" strokeWidth="1.200" /><path d="M2.300 2.300h3.500v4.500H2.300z" fill="#fff" /></Svg>
      <Svg w={16} h={13} className="ml-[8px]"><path d="M.5 4.500h2l3-3.500v11l-3-3.500h-2zM8 4q1.500 2.500 0 5M10.500 2.500q3 4 0 8M13 1q4 5.500 0 11" stroke="#fff" /></Svg>
      <div className="ml-[9px] flex w-[24px] flex-col items-center text-[12px] leading-[17px]">
        <Fit w={23}>ENG</Fit><Fit w={12}>IN</Fit>
      </div>
      <div className="ml-[12px] flex w-[58px] shrink-0 flex-col items-center text-[12px] leading-[18px]">
        <Fit w={28}>13:56</Fit><Fit w={59}>07-07-2019</Fit>
      </div>
      <div className="relative ml-[18px] h-[24px] w-[24px] shrink-0">
        <Svg w={24} h={24}>
          <path d="M0 4h16v14H9l-3 3-3-3H0z" fill="#fff" />
          <path d="M2.500 7h11M2.500 10h11M2.500 13h8" stroke="#222" strokeWidth="1.200" />
          <circle cx="15.500" cy="19" r="8" fill="#3c4346" stroke="#8a8f92" />
        </Svg>
        <span className="absolute left-[12px] top-[11px] text-[12px] leading-4">2</span>
      </div>
      <div className="ml-[12px] h-[40px] w-px bg-[#5c6468]" />
    </div>
  );
}

export default function App() {
  return (
    <div className="flex h-[768px] w-[1366px] flex-col overflow-hidden bg-white font-['Open_Sans','Noto_Sans',sans-serif]">
      <Browser />
      <ExcelHeader />
      <MenuBar />
      <Ribbon />
      <FormulaBar />
      <Sheet />
      <SheetTabs />
      <div className="flex h-[22px] items-center bg-white pl-[14px] pr-[9px] pt-[3px] text-[12px] leading-4 text-[#484644]">
        <Fit w={99}>Saved to OneDrive</Fit>
        <Chevron className="ml-auto mr-[43px]" />
        <Fit w={107}>Help Improve Office</Fit>
      </div>
      <Taskbar />
    </div>
  );
}
